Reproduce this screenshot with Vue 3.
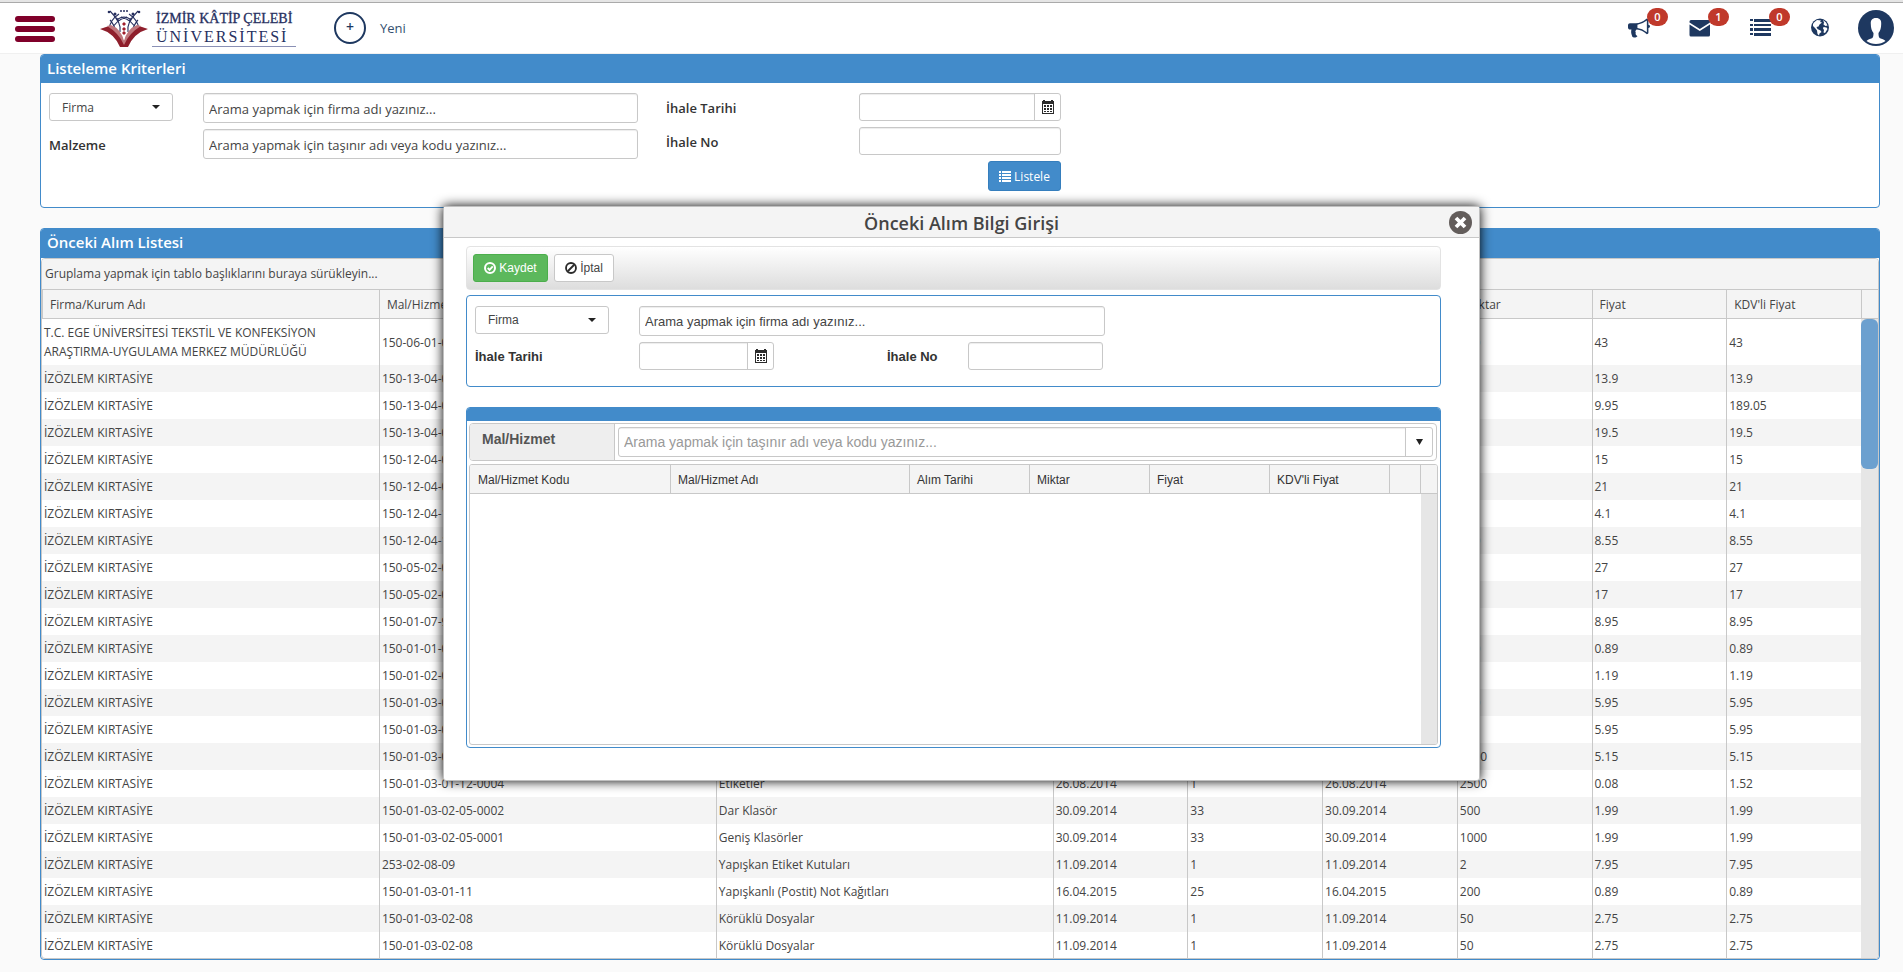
<script setup>
import { ref } from 'vue'

const columns = [
  'Firma/Kurum Adı', 'Mal/Hizmet Kodu', 'Mal/Hizmet Adı', 'Alım Tarihi', 'Kalem',
  'İhale Tarihi', 'Miktar', 'Fiyat', "KDV'li Fiyat",
]
const ege = 'T.C. EGE ÜNİVERSİTESİ TEKSTİL VE KONFEKSİYON ARAŞTIRMA-UYGULAMA MERKEZ MÜDÜRLÜĞÜ'
const izo = 'İZÖZLEM KIRTASİYE'
const rows = [
  [ege, '150-06-01-0', '', '', '', '', '100', '43', '43'],
  [izo, '150-13-04-0', '', '', '', '', '', '13.9', '13.9'],
  [izo, '150-13-04-0', '', '', '', '', '', '9.95', '189.05'],
  [izo, '150-13-04-0', '', '', '', '', '', '19.5', '19.5'],
  [izo, '150-12-04-0', '', '', '', '', '', '15', '15'],
  [izo, '150-12-04-0', '', '', '', '', '', '21', '21'],
  [izo, '150-12-04-1', '', '', '', '', '', '4.1', '4.1'],
  [izo, '150-12-04-1', '', '', '', '', '100', '8.55', '8.55'],
  [izo, '150-05-02-0', '', '', '', '', '', '27', '27'],
  [izo, '150-05-02-0', '', '', '', '', '', '17', '17'],
  [izo, '150-01-07-9', '', '', '', '', '', '8.95', '8.95'],
  [izo, '150-01-01-0', '', '', '', '', '100', '0.89', '0.89'],
  [izo, '150-01-02-0', '', '', '', '', '', '1.19', '1.19'],
  [izo, '150-01-03-0', '', '', '', '', '100', '5.95', '5.95'],
  [izo, '150-01-03-0', '', '', '', '', '', '5.95', '5.95'],
  [izo, '150-01-03-0', '', '', '', '', '1000', '5.15', '5.15'],
  [izo, '150-01-03-01-12-0004', 'Etiketler', '26.08.2014', '1', '26.08.2014', '2500', '0.08', '1.52'],
  [izo, '150-01-03-02-05-0002', 'Dar Klasör', '30.09.2014', '33', '30.09.2014', '500', '1.99', '1.99'],
  [izo, '150-01-03-02-05-0001', 'Geniş Klasörler', '30.09.2014', '33', '30.09.2014', '1000', '1.99', '1.99'],
  [izo, '253-02-08-09', 'Yapışkan Etiket Kutuları', '11.09.2014', '1', '11.09.2014', '2', '7.95', '7.95'],
  [izo, '150-01-03-01-11', 'Yapışkanlı (Postit) Not Kağıtları', '16.04.2015', '25', '16.04.2015', '200', '0.89', '0.89'],
  [izo, '150-01-03-02-08', 'Körüklü Dosyalar', '11.09.2014', '1', '11.09.2014', '50', '2.75', '2.75'],
  [izo, '150-01-03-02-08', 'Körüklü Dosyalar', '11.09.2014', '1', '11.09.2014', '50', '2.75', '2.75'],
]
const itemColumns = ['Mal/Hizmet Kodu', 'Mal/Hizmet Adı', 'Alım Tarihi', 'Miktar', 'Fiyat', "KDV'li Fiyat", '', '']
const filterType = ref('Firma')
const entryType = ref('Firma')
const dialogOpen = ref(true)
</script>

<template>
  <div class="page">
    <header class="topbar">
      <button class="menu" type="button" aria-label="Menü"><span></span><span></span><span></span></button>
      <a class="brand" href="#">
        <svg class="emblem" viewBox="0 0 48 38" aria-hidden="true">
          <g fill="none" stroke="#27305f" stroke-width="1.1">
            <path d="M9 20Q10 11 19 5M12 21Q15 11 27 8M16 22Q13 14 10 11M20 23Q22 14 10 2M39 20Q38 11 29 5M36 21Q33 11 21 8M32 22Q35 14 38 11M28 23Q26 14 38 2M18 10Q24 6 30 10M14 7Q17 9 19 12M34 7Q31 9 29 12" />
          </g>
          <g fill="#27305f">
            <circle cx="9" cy="3" r="1.3" /><circle cx="15" cy="5" r="1.5" /><circle cx="21" cy="2" r="1" />
            <circle cx="24" cy="2" r="1" /><circle cx="27" cy="2" r="1" /><circle cx="33" cy="5" r="1.5" /><circle cx="39" cy="3" r="1.3" />
          </g>
          <path d="M24 13l2 2-2 2-2-2zM24 18l2 2-2 2-2-2zM24 22l2 2-2 2-2-2z" fill="#a01e2c" />
          <path d="M0 20L9 17Q21 22 24 33Q27 22 39 17L48 20Q34 24 28 38H20Q14 24 0 20Z" fill="#8f1f2c" />
          <path d="M7 17L11 16Q21 20 24 32Q27 20 37 16L41 17Q29 24 24 36Q19 24 7 17Z" fill="#c0777c" />
        </svg>
        <span class="brand-text"><span class="brand-top">İZMİR KÂTİP ÇELEBİ</span><span class="brand-sub">ÜNİVERSİTESİ</span></span>
      </a>
      <button class="new" type="button"><span class="plus">+</span>Yeni</button>
      <nav class="tools">
        <a class="tool" href="#" aria-label="Duyurular">
          <svg width="22" height="22" viewBox="0 0 1792 1792"><path fill="#1e3860" d="M1664 640q53 0 90.500 37.500t37.500 90.500-37.500 90.500-90.500 37.500v384q0 52-38 90t-90 38q-417-347-812-380-58 19-91 66t-31 100.500 40 92.500q-20 33-23 65.500t6 58 33.500 55 48 50 61.500 50.500q-29 58-111.500 83t-168.500 11.500-132-55.500q-7-23-29.500-87.500t-32-94.500-23-89-15-101 3.500-98.500 22-110.500h-122q-66 0-113-47t-47-113v-192q0-66 47-113t113-47h480q435 0 896-384 52 0 90 38t38 90v384zm-128 604v-954q-394 302-768 343v270q377 42 768 341z" /></svg>
          <span class="badge">0</span>
        </a>
        <a class="tool" href="#" aria-label="Mesajlar">
          <svg width="22" height="22" viewBox="0 0 22 22"><path fill="#1e3860" d="M2 3h17.500q1.500 0 1.500 1.500v1L10.800 12L.500 5.500V4.500Q.500 3 2 3zM.500 7.500L10.800 14L21 7.500V18q0 1.500-1.500 1.500H2Q.500 19.500.500 18z" /></svg>
          <span class="badge">1</span>
        </a>
        <a class="tool" href="#" aria-label="Görevler">
          <svg width="22" height="22" viewBox="0 0 22 22" fill="#1e3860"><path d="M0 2h3v2H0zM0 7h3v2H0zM0 11h3v3H0zM0 16h3v2H0zM4 2h17v3H4zM4 7h17v2H4zM4 11h17v3H4zM4 16h17v3H4z" /></svg>
          <span class="badge">0</span>
        </a>
        <a class="tool" href="#" aria-label="Dil">
          <svg width="22" height="22" viewBox="0 0 22 22"><circle cx="9" cy="10.500" r="9" fill="#1e3860" /><path fill="#fff" d="M3 5.500L6 3l4 .5-1 1.500 2 .5-2.500 2-1 2-2 .5 1 2 3 1.500 1 1.500-2 1.500-.5 2-1.500-1.500L6 13.500 4 11 2 9V7zM12 3l3 2.500 1.500 3-2 .5-2-1.500.5-2zM12.500 10l3 .5 1 1.500-2.500 4-1.500-.5.500-2.500-1-1.500z" /></svg>
        </a>
        <a class="avatar" href="#" aria-label="Profil">
          <svg width="36" height="36" viewBox="0 0 36 36"><circle cx="18" cy="18" r="18" fill="#1e3860" /><path fill="#fff" d="M18 8c-4 0-5.500 2.500-5.200 6 0 4 1 7 2.700 9 0 2.500-.2 4.500-1.500 5.200-2 .9-4 1-5.500 2.800Q12.500 34 18 34t9.500-3c-1.500-1.800-3.500-1.900-5.500-2.800-1.300-.7-1.500-2.700-1.500-5.200 1.700-2 2.700-5 2.700-9C23.500 10.500 22 8 18 8z" /></svg>
        </a>
      </nav>
    </header>

    <main class="content">
      <section class="panel">
        <h2 class="panel-title">Listeleme Kriterleri</h2>
        <form class="criteria" @submit.prevent>
          <div class="left-fields">
            <div class="select">
              <select v-model="filterType" aria-label="Arama türü"><option>Firma</option></select>
              <svg width="8" height="4" viewBox="0 0 8 4"><path d="M0 0h8L4 4z" fill="#222" /></svg>
            </div>
            <input class="field" type="text" aria-label="Firma" placeholder="Arama yapmak için firma adı yazınız...">
            <label for="material">Malzeme</label>
            <input id="material" class="field" type="text" placeholder="Arama yapmak için taşınır adı veya kodu yazınız...">
          </div>
          <div class="right-fields">
            <label for="date">İhale Tarihi</label>
            <div class="date">
              <input id="date" type="text">
              <button type="button" aria-label="Takvim">
                <svg width="12" height="14" viewBox="0 0 12 14"><path fill="#2b2b2b" fill-rule="evenodd" d="M1 0h2v1h6V0h2v1h1v13H0V1h1zM1 4v9h10V4zM2 5h2v2H2zm3 0h2v2H5zm3 0h2v2H8zM2 8h2v2H2zm3 0h2v2H5zm3 0h2v2H8zM2 11h2v1H2zm3 0h2v1H5zm3 0h2v1H8z" /></svg>
              </button>
            </div>
            <label for="tender">İhale No</label>
            <input id="tender" class="field low" type="text">
            <button class="btn primary" type="submit">
              <svg width="12" height="11" viewBox="0 0 12 11"><path fill="#fff" d="M0 0h2v2H0zM3 0h9v2H3zM0 3h2v2H0zM3 3h9v2H3zM0 6h2v2H0zM3 6h9v2H3zM0 9h2v2H0zM3 9h9v2H3z" /></svg>
              Listele
            </button>
          </div>
        </form>
      </section>

      <section class="panel list">
        <h2 class="panel-title">Önceki Alım Listesi</h2>
        <div class="grid">
          <div class="group-bar">Gruplama yapmak için tablo başlıklarını buraya sürükleyin...</div>
          <div class="grid-body">
            <table>
              <colgroup>
                <col class="wide"><col class="wide"><col class="wide"><col><col><col><col><col><col>
              </colgroup>
              <thead><tr><th v-for="c in columns" :key="c" scope="col">{{ c }}</th></tr></thead>
              <tbody>
                <tr v-for="(r, i) in rows" :key="i"><td v-for="(v, j) in r" :key="j">{{ v }}</td></tr>
              </tbody>
            </table>
            <div class="scroll"><div class="scroll-head"></div><div class="thumb"></div></div>
          </div>
        </div>
      </section>
    </main>

    <div v-if="dialogOpen" class="dialog" role="dialog" aria-labelledby="dialog-title">
      <div class="dialog-bar">
        <h2 id="dialog-title">Önceki Alım Bilgi Girişi</h2>
        <button class="close" type="button" aria-label="Kapat" @click="dialogOpen = false">
          <svg width="23" height="23" viewBox="0 0 23 23"><circle cx="11.500" cy="11.500" r="11.500" fill="#635d5b" /><path d="M7 7l9 9M16 7l-9 9" stroke="#fff" stroke-width="3.800" /></svg>
        </button>
      </div>
      <div class="dialog-body">
        <div class="toolbar">
          <button class="btn save" type="button">
            <svg width="12" height="12" viewBox="0 0 13 13" fill="none" stroke="#fff"><circle cx="6.500" cy="6.500" r="5.400" stroke-width="2.200" /><path d="M4 6.500l2 2 3.500-3.700" stroke-width="2" /></svg>
            Kaydet
          </button>
          <button class="btn cancel" type="button">
            <svg width="12" height="12" viewBox="0 0 13 13" fill="none" stroke="#2b2b2b" stroke-width="2"><circle cx="6.500" cy="6.500" r="5.400" /><path d="M3 10L10 3" /></svg>
            İptal
          </button>
        </div>

        <form class="entry" @submit.prevent>
          <div class="entry-row">
            <div class="select entry-type">
              <select v-model="entryType" aria-label="Arama türü"><option>Firma</option></select>
              <svg width="8" height="4" viewBox="0 0 8 4"><path d="M0 0h8L4 4z" fill="#222" /></svg>
            </div>
            <input class="field company" type="text" aria-label="Firma" placeholder="Arama yapmak için firma adı yazınız...">
          </div>
          <div class="entry-row">
            <label class="date-label" for="entry-date">İhale Tarihi</label>
            <div class="date entry-date">
              <input id="entry-date" type="text">
              <button type="button" aria-label="Takvim">
                <svg width="12" height="14" viewBox="0 0 12 14"><path fill="#2b2b2b" fill-rule="evenodd" d="M1 0h2v1h6V0h2v1h1v13H0V1h1zM1 4v9h10V4zM2 5h2v2H2zm3 0h2v2H5zm3 0h2v2H8zM2 8h2v2H2zm3 0h2v2H5zm3 0h2v2H8zM2 11h2v1H2zm3 0h2v1H5zm3 0h2v1H8z" /></svg>
              </button>
            </div>
            <label class="tender-label" for="entry-tender">İhale No</label>
            <input id="entry-tender" class="field low tender" type="text">
          </div>
        </form>

        <section class="items">
          <div class="items-head"></div>
          <div class="items-search">
            <label for="item">Mal/Hizmet</label>
            <div class="combo">
              <input id="item" type="text" placeholder="Arama yapmak için taşınır adı veya kodu yazınız...">
              <button type="button" aria-label="Listeyi aç"><svg width="7" height="6" viewBox="0 0 7 6"><path d="M0 0h7L3.500 6z" fill="#222" /></svg></button>
            </div>
          </div>
          <div class="items-grid">
            <table>
              <colgroup>
                <col class="c-code"><col class="c-name"><col class="c-val"><col class="c-val"><col class="c-val"><col class="c-val"><col><col class="c-scroll">
              </colgroup>
              <thead><tr><th v-for="(c, i) in itemColumns" :key="i" scope="col">{{ c }}</th></tr></thead>
            </table>
            <div class="items-empty"></div>
          </div>
        </section>
      </div>
    </div>
  </div>
</template>

<style>
body {
  background: #fafafa;
}
</style>

<style scoped>
* {
  box-sizing: border-box;
}
.page {
  height: 100vh;
  display: flex;
  flex-direction: column;
  overflow: hidden;
  font-family: "Open Sans", sans-serif;
  font-size: 13px;
  color: #444;
}
button, input, select {
  font: inherit;
  color: inherit;
  margin: 0;
}
button {
  cursor: pointer;
}
svg {
  display: block;
  flex: none;
}
.topbar {
  height: 54px;
  flex: none;
  display: flex;
  align-items: center;
  padding: 3px 9px 0 15px;
  background: linear-gradient(#e5e5e5 2px, #aaa 2px, #aaa 3px, #fff 3px);
  border-bottom: 1px solid #f0f0f0;
}
.menu {
  width: 40px;
  display: grid;
  gap: 4px;
  padding: 2px 0 0;
  border: 0;
  background: none;
}
.menu span {
  height: 6px;
  border-radius: 3px;
  background: #80002a;
}
.brand {
  display: flex;
  align-items: center;
  gap: 4px;
  margin-left: 45px;
  width: 197px;
  color: #27305f;
  text-decoration: none;
  font-family: "Liberation Serif", serif;
}
.emblem {
  width: 48px;
  height: 38px;
}
.brand-text {
  display: flex;
  flex-direction: column;
  padding: 0 4px;
  border-bottom: 1px solid #8a90b5;
  white-space: nowrap;
}
.brand-top {
  font-size: 14px;
  line-height: 18px;
  -webkit-text-stroke: 0.3px #27305f;
}
.brand-sub {
  font-size: 16px;
  line-height: 18px;
  letter-spacing: 2px;
}
.new {
  display: flex;
  align-items: center;
  gap: 14px;
  margin-left: 37px;
  padding: 0;
  border: 0;
  background: none;
  color: #34506f;
}
.plus {
  width: 32px;
  height: 32px;
  border: 2px solid #1e3860;
  border-radius: 50%;
  color: #1e3860;
  font-size: 14px;
  font-weight: 600;
  line-height: 26px;
}
.tools {
  display: flex;
  align-items: center;
  margin-left: auto;
}
.tool {
  position: relative;
  width: 61px;
}
.badge {
  position: absolute;
  top: -9px;
  left: 19px;
  width: 21px;
  height: 18px;
  border-radius: 9px;
  background: #c0392b;
  color: #fff;
  font-size: 11px;
  font-weight: 600;
  line-height: 18px;
  text-align: center;
}
.avatar {
  margin-left: -14px;
}
.content {
  flex: 1;
  min-height: 0;
  display: flex;
  flex-direction: column;
  gap: 20px;
  padding: 0 23px 12px 40px;
}
.panel {
  border: 1px solid #428bca;
  border-radius: 4px;
  background: #fff;
  overflow: hidden;
}
.panel-title {
  margin: 0;
  padding: 0 6px 2px;
  background: #428bca;
  color: #fff;
  font-size: 15px;
  font-weight: 600;
  line-height: 26px;
}
.criteria {
  display: flex;
  gap: 28px;
  padding: 10px 8px 16px;
}
.left-fields {
  display: grid;
  grid-template-columns: 154px 435px;
  grid-auto-rows: 30px;
  gap: 6px 0;
}
.right-fields {
  display: grid;
  grid-template-columns: 193px 202px;
  grid-template-rows: 28px 28px 30px;
  gap: 6px 0;
}
label {
  align-self: center;
  font-weight: 600;
  color: #333;
}
.criteria label {
  padding-top: 2px;
}
.select {
  position: relative;
  width: 124px;
}
.select select {
  width: 100%;
  height: 28px;
  appearance: none;
  padding: 0 24px 0 12px;
  border: 1px solid #c8c8c8;
  border-radius: 3px;
  background: #fff;
  font-size: 12px;
}
.select svg {
  position: absolute;
  top: 12px;
  right: 13px;
  pointer-events: none;
}
.field {
  height: 30px;
  min-width: 0;
  padding: 0 5px;
  border: 1px solid #c8c8c8;
  border-radius: 3px;
  background: #fff;
  box-shadow: inset 0 1px 1px #00000013;
}
.left-fields .field {
  padding-top: 2px;
}
.low {
  height: 28px;
}
.field::placeholder {
  color: #444;
  opacity: 1;
}
.date {
  display: flex;
  height: 28px;
  border: 1px solid #c8c8c8;
  border-radius: 3px;
  background: #fff;
}
.date input {
  flex: 1;
  min-width: 0;
  border: 0;
  background: none;
  box-shadow: inset 0 1px 1px #00000013;
}
.date button {
  width: 26px;
  display: grid;
  place-items: center;
  padding: 0;
  border: 0;
  border-left: 1px solid #c8c8c8;
  background: none;
}
.btn {
  display: flex;
  align-items: center;
  justify-content: center;
  gap: 3px;
  padding: 0;
  border: 1px solid #c8c8c8;
  border-radius: 3px;
  background: #fff;
  font-size: 12px;
}
.primary {
  grid-column: 2;
  justify-self: end;
  width: 73px;
  border-color: #357ebd;
  background: #428bca;
  color: #fff;
}
.list {
  flex: 1;
  min-height: 0;
  display: flex;
  flex-direction: column;
}
.list .panel-title {
  flex: none;
  line-height: 27px;
}
.grid {
  flex: 1;
  min-height: 0;
  display: flex;
  flex-direction: column;
  border: 1px solid #c8c8c8;
  border-radius: 4px;
  overflow: hidden;
  font-size: 12px;
}
.group-bar {
  flex: none;
  height: 30px;
  padding: 0 3px;
  background: #f4f4f4;
  line-height: 30px;
}
.grid-body {
  flex: 1;
  min-height: 0;
  display: flex;
  overflow: hidden;
}
table {
  width: 100%;
  flex: 1;
  align-self: flex-start;
  table-layout: fixed;
  border-collapse: separate;
  border-spacing: 0;
}
.wide {
  width: 18.52%;
}
th {
  height: 30px;
  padding: 0 7px;
  border: solid #c8c8c8;
  border-width: 1px 0 1px 1px;
  background: #f4f4f4;
  font-size: 12px;
  font-weight: 400;
  text-align: left;
}
td {
  height: 27px;
  padding: 4px 2px;
  border-left: 1px solid #c8c8c8;
  line-height: 19px;
}
td:first-child {
  border-left: 0;
}
tbody tr:nth-child(even) {
  background: #f4f4f4;
}
.scroll {
  width: 17px;
  flex: none;
  background: #e6e6e6;
}
.scroll-head {
  height: 30px;
  border: solid #c8c8c8;
  border-width: 1px 0 1px 1px;
  background: #f4f4f4;
}
.thumb {
  height: 150px;
  border-radius: 6px;
  background: #6ca0cf;
}
.dialog {
  position: absolute;
  top: 206px;
  left: 443px;
  right: 423px;
  border: 1px solid #c0c0c0;
  border-radius: 3px;
  background: #fff;
  box-shadow: 0 0 12px #000;
  font-family: "Liberation Sans", sans-serif;
}
.dialog-bar {
  position: relative;
  height: 31px;
  background: #f4f4f4;
  border-bottom: 1px solid #c8c8c8;
}
.dialog-bar h2 {
  margin: 0;
  font-family: "Open Sans", sans-serif;
  font-size: 18px;
  font-weight: 600;
  line-height: 32px;
  text-align: center;
}
.close {
  position: absolute;
  top: 4px;
  right: 7px;
  padding: 0;
  border: 0;
  background: none;
}
.dialog-body {
  padding: 8px 38px 32px 22px;
}
.toolbar {
  display: flex;
  gap: 6px;
  height: 44px;
  padding: 7px 6px;
  border: 1px solid #e3e3e3;
  border-radius: 4px;
  background: linear-gradient(#fff, #ddd);
}
.save {
  width: 75px;
  border-color: #4cae4c;
  background: #5cb85c;
  color: #fff;
}
.cancel {
  width: 60px;
}
.entry {
  display: grid;
  gap: 6px;
  margin-top: 5px;
  padding: 10px 8px 16px;
  border: 1px solid #428bca;
  border-radius: 4px;
}
.entry-row {
  display: flex;
}
.entry label, .items label {
  font-weight: 700;
}
.entry-type {
  width: 134px;
  margin-right: 30px;
}
.company {
  width: 466px;
}
.date-label {
  width: 164px;
}
.entry-date {
  width: 135px;
}
.tender-label {
  width: 81px;
  margin-left: 113px;
}
.tender {
  width: 135px;
}
.items {
  margin-top: 20px;
  padding-bottom: 2px;
  border: 1px solid #428bca;
  border-radius: 4px;
  overflow: hidden;
}
.items-head {
  height: 13px;
  background: #428bca;
}
.items-search {
  display: flex;
  height: 38px;
  margin: 2px 3px 3px 2px;
  border: 1px solid #c8c8c8;
  border-radius: 4px;
  overflow: hidden;
}
.items-search label {
  width: 145px;
  align-self: stretch;
  padding: 0 12px;
  background: #eee;
  border-right: 1px solid #c8c8c8;
  color: #555;
  font-size: 14px;
  line-height: 30px;
}
.combo {
  flex: 1;
  display: flex;
  margin: 3px;
  border: 1px solid #c8c8c8;
  border-radius: 3px;
}
.combo input {
  flex: 1;
  min-width: 0;
  padding: 0 5px;
  border: 0;
  background: none;
  font-size: 14px;
  box-shadow: inset 0 1px 1px #00000013;
}
.combo input::placeholder {
  color: #999;
  opacity: 1;
}
.combo button {
  width: 27px;
  display: grid;
  place-items: center;
  padding: 0;
  border: 0;
  border-left: 1px solid #c8c8c8;
  background: none;
}
.items-grid {
  margin: 0 2px;
  border: 1px solid #c8c8c8;
  border-radius: 3px;
  overflow: hidden;
}
.items-grid th {
  height: 29px;
  border-top: 0;
  padding: 2px 7px 0;
  color: #333;
}
.items-grid th:first-child {
  padding-left: 8px;
  border-left: 0;
}
.c-code {
  width: 200px;
}
.c-name {
  width: 239px;
}
.c-val {
  width: 120px;
}
.c-scroll {
  width: 17px;
}
.items-empty {
  height: 250px;
  border-right: 16px solid #e6e6e6;
}
</style>
